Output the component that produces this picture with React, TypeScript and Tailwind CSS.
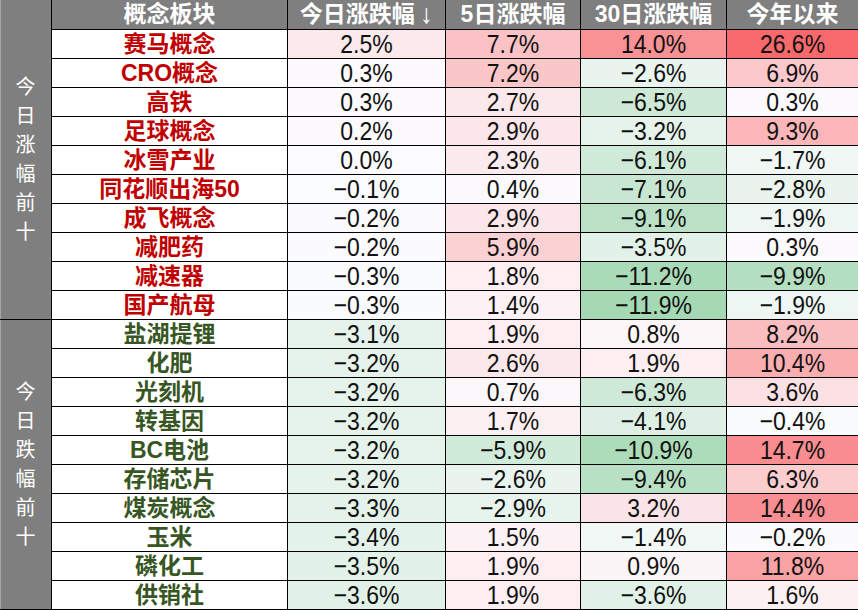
import React from "react";

type Row = [string, number, number, number, number];

const top: Row[] = [
  ["赛马概念", 2.5, 7.7, 14.0, 26.6],
  ["CRO概念", 0.3, 7.2, -2.6, 6.9],
  ["高铁", 0.3, 2.7, -6.5, 0.3],
  ["足球概念", 0.2, 2.9, -3.2, 9.3],
  ["冰雪产业", 0.0, 2.3, -6.1, -1.7],
  ["同花顺出海50", -0.1, 0.4, -7.1, -2.8],
  ["成飞概念", -0.2, 2.9, -9.1, -1.9],
  ["减肥药", -0.2, 5.9, -3.5, 0.3],
  ["减速器", -0.3, 1.8, -11.2, -9.9],
  ["国产航母", -0.3, 1.4, -11.9, -1.9],
];

const bottom: Row[] = [
  ["盐湖提锂", -3.1, 1.9, 0.8, 8.2],
  ["化肥", -3.2, 2.6, 1.9, 10.4],
  ["光刻机", -3.2, 0.7, -6.3, 3.6],
  ["转基因", -3.2, 1.7, -4.1, -0.4],
  ["BC电池", -3.2, -5.9, -10.9, 14.7],
  ["存储芯片", -3.2, -2.6, -9.4, 6.3],
  ["煤炭概念", -3.3, -2.9, 3.2, 14.4],
  ["玉米", -3.4, 1.5, -1.4, -0.2],
  ["磷化工", -3.5, 1.9, 0.9, 11.8],
  ["供销社", -3.6, 1.9, -3.6, 1.6],
];

function mix(a: number[], b: number[], t: number) {
  const c = a.map((x, i) => Math.round(x + (b[i] - x) * t));
  return `rgb(${c[0]},${c[1]},${c[2]})`;
}

function bg(v: number) {
  const white = [252, 252, 255];
  if (v >= 0) return mix(white, [248, 105, 107], Math.min(1, v / 19.5));
  return mix(white, [99, 190, 123], Math.min(1, -v / 21));
}

function fmt(v: number) {
  const s = Math.abs(v).toFixed(1) + "%";
  return v < 0 ? "−" + s : s;
}

const font = "font-['Liberation_Sans','Noto_Sans_CJK_SC',sans-serif]";

function Side({ text, rows }: { text: string; rows: string }) {
  return (
    <div
      className="bg-[#7f7f7f] flex flex-col items-center justify-center text-white text-[20px] leading-[29px] shadow-[inset_1px_0_0_#a6a6a6] [grid-column:1]"
      style={{ gridRow: rows }}
    >
      {text.split("").map((c, i) => (
        <div key={i}>{c}</div>
      ))}
    </div>
  );
}

function DataRows({ data, color }: { data: Row[]; color: string }) {
  return (
    <>
      {data.map((r) => (
        <React.Fragment key={r[0]}>
          <div className={`bg-white flex items-center justify-center font-bold text-[23px] leading-none ${color}`}>
            {r[0]}
          </div>
          {[r[1], r[2], r[3], r[4]].map((v, i) => (
            <div
              key={i}
              className="flex items-center justify-center text-[23px] leading-none text-[#111]"
              style={{ backgroundColor: bg(v) }}
            >
              <span className="inline-block scale-y-[1.12]">{fmt(v)}</span>
            </div>
          ))}
        </React.Fragment>
      ))}
    </>
  );
}

export default function App() {
  return (
    <div className={`w-[858px] h-[610px] bg-black ${font}`}>
      <div className="grid gap-px pb-px grid-cols-[51px_235px_157px_134px_145px_131px] grid-rows-[29px_repeat(20,28px)] bg-black">
        <Side text="今日涨幅前十" rows="1 / 12" />
        <Side text="今日跌幅前十" rows="12 / 22" />
        <div className="bg-[#7f7f7f] text-white font-bold text-[23px] leading-none flex items-center justify-center">
          概念板块
        </div>
        <div className="bg-[#7f7f7f] text-white font-bold text-[23px] leading-none flex items-center justify-center">
          今日涨跌幅<span className="ml-[5px] font-normal text-[27px] leading-none inline-block">↓</span>
        </div>
        <div className="bg-[#7f7f7f] text-white font-bold text-[23px] leading-none flex items-center justify-center">
          5日涨跌幅
        </div>
        <div className="bg-[#7f7f7f] text-white font-bold text-[23px] leading-none flex items-center justify-center">
          30日涨跌幅
        </div>
        <div className="bg-[#7f7f7f] text-white font-bold text-[23px] leading-none flex items-center justify-center">
          今年以来
        </div>
        <DataRows data={top} color="text-[#c00000]" />
        <DataRows data={bottom} color="text-[#375623]" />
      </div>
    </div>
  );
}
